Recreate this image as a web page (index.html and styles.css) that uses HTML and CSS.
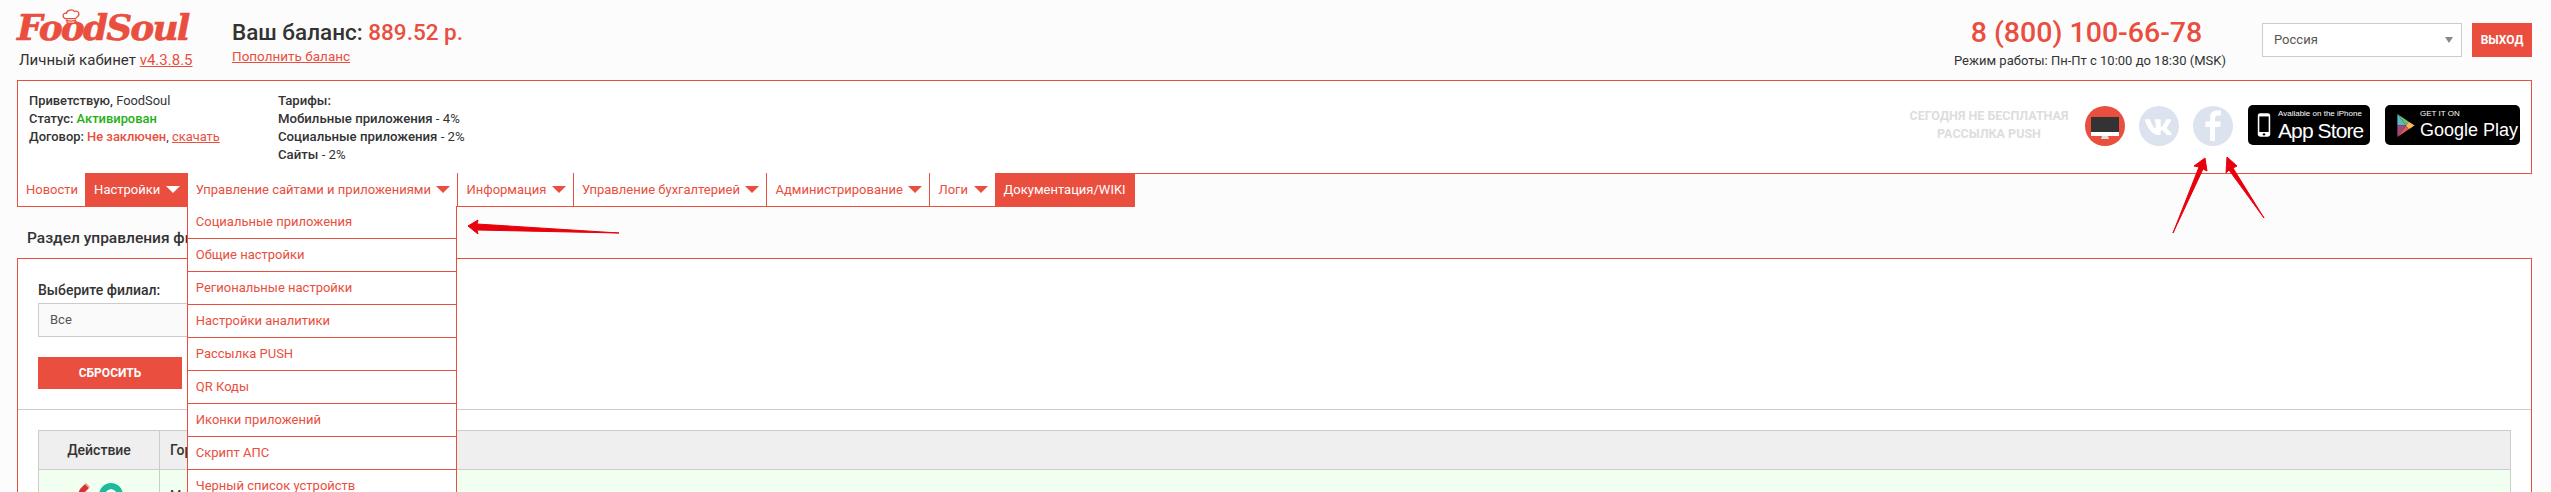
FILE: index.html
```html
<!DOCTYPE html>
<html lang="ru">
<head>
    <meta charset="UTF-8">
    <meta name="viewport" content="width=device-width, initial-scale=1.0">
    <title>FoodSoul</title>
    <link rel="stylesheet" href="styles.css">
</head>
<body>
<div class="page">

    <!-- header -->
    <header class="top">
        <div class="logo">
            <div class="logo-name">
                <svg class="logo-hat" viewBox="0 0 22 18"><path d="M5 12C1 11 1 5 6 6c0-4 7-5 9-2 4-2 7 3 3 6l-2 2c-4 0-8 0-11 0zM6 14c3 1 7 1 10 0l-1 3H7z" fill="#fff" stroke="#e94e3e" stroke-width="1.4"/></svg>
                FoodSoul
            </div>
            <div class="logo-sub">Личный кабинет <a href="#">v4.3.8.5</a></div>
        </div>
        <div class="balance">
            <div class="balance-sum">Ваш баланс: <span>889.52 р.</span></div>
            <a href="#">Пополнить баланс</a>
        </div>
        <div class="phone">
            <div class="phone-num">8 (800) 100-66-78</div>
            <div class="phone-hours">Режим работы: Пн-Пт с 10:00 до 18:30 (MSK)</div>
        </div>
        <div class="country">Россия<i></i></div>
        <a class="logout" href="#">ВЫХОД</a>
    </header>

    <!-- info -->
    <section class="info">
        <div class="info-col first">
            <p><b>Приветствую,</b> FoodSoul</p>
            <p><b>Статус:</b> <b class="green">Активирован</b></p>
            <p><b>Договор:</b> <b class="red">Не заключен</b>, <a href="#">скачать</a></p>
        </div>
        <div class="info-col">
            <p><b>Тарифы:</b></p>
            <p><b>Мобильные приложения</b> - 4%</p>
            <p><b>Социальные приложения</b> - 2%</p>
            <p><b>Сайты</b> - 2%</p>
        </div>
        <div class="push">СЕГОДНЯ НЕ БЕСПЛАТНАЯ<br>РАССЫЛКА PUSH</div>
        <div class="round monitor">
            <svg viewBox="0 0 40 40" width="40" height="40"><rect x="6" y="11" width="28" height="19" fill="#fff"/><rect x="6" y="11" width="28" height="15" fill="#333"/><path d="M17 30h6l1 3h-8z" fill="#ddd"/></svg>
        </div>
        <div class="round soc">
            <svg viewBox="0 0 24 24" width="30" height="30"><path fill="#fff" d="M21.5 7.5c.15-.5 0-.85-.7-.85h-2.3c-.6 0-.85.3-1 .65 0 0-1.15 2.85-2.8 4.7-.5.5-.75.7-1 .7-.15 0-.35-.15-.35-.65V7.5c0-.6-.15-.85-.65-.85H9c-.35 0-.6.25-.6.5 0 .55.85.7.95 2.3v3.35c0 .75-.15.9-.4.9-.8 0-2.7-2.9-3.85-6.2-.2-.65-.45-.85-1.05-.85H1.7c-.65 0-.8.3-.8.65 0 .6.8 3.65 3.7 7.7 1.95 2.75 4.65 4.25 7.1 4.25 1.5 0 1.65-.35 1.65-.9v-2.1c0-.65.15-.8.6-.8.35 0 .95.15 2.3 1.5 1.55 1.55 1.8 2.25 2.65 2.25h2.3c.65 0 1-.35.8-1-.2-.65-.95-1.55-1.95-2.65-.55-.65-1.35-1.3-1.6-1.65-.35-.45-.25-.65 0-1.05 0 0 2.85-4 3.15-5.4z"/></svg>
        </div>
        <div class="round soc">
            <svg viewBox="0 0 40 40" width="40" height="40"><path fill="#fff" d="M22 35V21h5l.8-5.500H22v-3.200c0-1.700.6-2.800 2.900-2.800H28V4.600C27.300 4.500 25.800 4.400 24 4.400c-4.200 0-7 2.500-7 7.200v3.900h-4.500V21H17v14z"/></svg>
        </div>
        <a class="store app" href="#">
            <svg viewBox="0 0 18 32" width="14" height="26"><rect x="1" y="1" width="16" height="30" rx="3" fill="#fff"/><rect x="3" y="5" width="12" height="20" fill="#000"/><circle cx="9" cy="28" r="1.500" fill="#000"/></svg>
            <span class="store-text"><small>Available on the iPhone</small><b>App Store</b></span>
        </a>
        <a class="store gplay" href="#">
            <svg viewBox="0 0 20 26" width="20" height="25"><path d="M1 1v12h9z" fill="#5bb8c4"/><path d="M1 25V13h9z" fill="#a04a7c"/><path d="M1 1l12 8-3 4z" fill="#6fbe6a"/><path d="M1 25l12-8-3-4z" fill="#dc5a54"/><path d="M13 9l6 4-6 4-3-4z" fill="#f5b75f"/></svg>
            <span class="store-text"><small>GET IT ON</small><b>Google Play</b></span>
        </a>
    </section>

    <!-- menu -->
    <nav class="menu">
        <a class="menu-item" href="#">Новости</a>
        <a class="menu-item active arrow" href="#">Настройки</a>
        <div class="menu-item arrow open">
            Управление сайтами и приложениями
            <ul class="dropdown">
                <li>Социальные приложения</li>
                <li>Общие настройки</li>
                <li>Региональные настройки</li>
                <li>Настройки аналитики</li>
                <li>Рассылка PUSH</li>
                <li>QR Коды</li>
                <li>Иконки приложений</li>
                <li>Скрипт АПС</li>
                <li>Черный список устройств</li>
            </ul>
        </div>
        <a class="menu-item arrow" href="#">Информация</a>
        <a class="menu-item arrow" href="#">Управление бухгалтерией</a>
        <a class="menu-item arrow" href="#">Администрирование</a>
        <a class="menu-item arrow" href="#">Логи</a>
        <a class="menu-item active" href="#">Документация/WIKI</a>
    </nav>

    <h1 class="title">Раздел управления филиалами</h1>

    <!-- content -->
    <section class="panel">
        <div class="filter">
            <label>Выберите филиал:</label>
            <div class="branch">Все</div>
            <a class="reset" href="#">СБРОСИТЬ</a>
        </div>
        <div class="list">
            <table>
                <thead>
                    <tr><th class="col-action">Действие</th><th class="col-city">Город</th></tr>
                </thead>
                <tbody>
                    <tr>
                        <td class="col-action">
                            <div class="actions">
                                <svg viewBox="0 0 14 14" width="14" height="14"><path d="M1 13l3-7 5-5 4 4-5 5z" fill="#d9303a"/><path d="M9 1l1-1 4 4-1 1z" fill="#f0a070"/></svg>
                                <i class="view"></i>
                            </div>
                        </td>
                        <td class="col-city">Москва</td>
                    </tr>
                </tbody>
            </table>
        </div>
    </section>

    <!-- red arrows drawn over the screenshot -->
    <svg class="marks" width="2551" height="492" viewBox="0 0 2551 492">
        <path d="M468 226l10-6-1 4 142 9-142-3 1 4zM2205 158l2 13-4-2-30 64 26-66-5-1zM2227 157l10 9-4 2 31 50-35-48-3 3z" fill="#e8000c" stroke="#e8000c" stroke-width="1"/>
    </svg>
</div>
</body>
</html>
```

FILE: styles.css
```css
* {
    box-sizing: border-box;
}

html, body {
    margin: 0;
    height: 492px;
    overflow: hidden;
}

body {
    background-color: #fcfcfc;
    color: #333;
    font-family: Roboto, "Noto Sans", sans-serif;
    font-size: 13px;
}

a {
    color: #e94e3e;
}

p {
    margin: 0;
}

.page {
    position: relative;
    height: 492px;
    padding: 0 19px 0 17px;
    overflow: hidden;
}

/* header */
.top {
    display: flex;
    align-items: flex-start;
    height: 80px;
}

.logo {
    width: 215px;
    padding-top: 9px;
}

.logo-name {
    position: relative;
    height: 36px;
    color: #e94e3e;
    font-family: "DejaVu Serif", serif;
    font-size: 36px;
    font-weight: bold;
    font-style: italic;
    line-height: 36px;
    letter-spacing: -1.9px;
    white-space: nowrap;
    -webkit-text-stroke: 0.6px #e94e3e;
}

.logo-hat {
    position: absolute;
    left: 44px;
    top: -1px;
    width: 20px;
    height: 16px;
}

.logo-sub {
    margin: 5px 0 0 2px;
    font-size: 15px;
    line-height: 20px;
}

.balance {
    flex: 1;
    padding-top: 16px;
}

.balance-sum {
    font-size: 22.5px;
    font-weight: 500;
    line-height: 32px;
}

.balance-sum span {
    color: #e94e3e;
}

.balance a {
    display: block;
    font-size: 13.500px;
    line-height: 16px;
}

.phone {
    width: 265px;
    margin-right: 43px;
    padding-top: 14px;
    text-align: center;
    white-space: nowrap;
}

.phone-num {
    color: #e94e3e;
    font-size: 28.5px;
    font-weight: 500;
    line-height: 38px;
}

.phone-hours {
    font-size: 13px;
    line-height: 18px;
}

.country {
    position: relative;
    width: 200px;
    height: 34px;
    margin-top: 23px;
    padding-left: 11px;
    background-color: #fff;
    border: 1px solid #ccc;
    color: #555;
    line-height: 32px;
}

.country i {
    position: absolute;
    right: 8px;
    top: 13px;
    border-top: 6px solid #888;
    border-left: 4px solid transparent;
    border-right: 4px solid transparent;
}

.logout {
    width: 60px;
    height: 34px;
    margin: 23px 0 0 10px;
    background-color: #e94e3e;
    color: #fff;
    font-size: 12px;
    font-weight: bold;
    line-height: 34px;
    text-align: center;
    text-decoration: none;
}

/* info */
.info {
    display: flex;
    align-items: flex-start;
    height: 94px;
    padding: 11px 11px 0 11px;
    background-color: #fff;
    border: 1px solid #e94e3e;
    line-height: 18px;
}

.info-col {
    width: 250px;
    font-size: 13.2px;
}

.info-col b {
    font-weight: 500;
}

.info-col.first {
    width: 249px;
    font-size: 12.9px;
}

.green {
    color: #22b014;
}

.red {
    color: #e94e3e;
}

.push {
    width: 162px;
    margin: 15px 15px 0 auto;
    color: #ddd;
    font-size: 12.5px;
    font-weight: bold;
    text-align: center;
    white-space: nowrap;
}

.round {
    display: flex;
    align-items: center;
    justify-content: center;
    width: 40px;
    height: 40px;
    margin: 14px 14px 0 0;
    border-radius: 50%;
    background-color: #dce3ee;
}

.monitor {
    background-color: #e94e3e;
}

.store {
    display: flex;
    align-items: center;
    height: 40px;
    margin-top: 13px;
    background-color: #000;
    border-radius: 5px;
    color: #fff;
    text-decoration: none;
    white-space: nowrap;
}

.app {
    gap: 7px;
    width: 122px;
    margin-left: 1px;
    padding-left: 9px;
}

.gplay {
    gap: 4px;
    width: 135px;
    margin-left: 15px;
    padding-left: 11px;
}

.store-text {
    display: flex;
    flex-direction: column;
    font-family: "Liberation Sans", sans-serif;
}

.store-text small {
    font-size: 8px;
    line-height: 10px;
}

.store-text b {
    font-size: 21px;
    font-weight: normal;
    line-height: 23px;
    letter-spacing: -0.9px;
}

.gplay b {
    font-size: 18px;
    letter-spacing: 0;
}

/* menu */
.menu {
    display: inline-flex;
    vertical-align: top;
    height: 34px;
    background-color: #fff;
    border: 1px solid #e94e3e;
    border-top: none;
    margin-top: -1px;
}

.menu-item {
    position: relative;
    display: flex;
    align-items: center;
    padding: 0 7px 0 8px;
    border-right: 1px solid #e94e3e;
    color: #e94e3e;
    font-size: 13px;
    text-decoration: none;
    white-space: nowrap;
}

.menu-item.arrow::after {
    content: "";
    margin-left: 5.5px;
    border-top: 7px solid #e94e3e;
    border-left: 7px solid transparent;
    border-right: 7px solid transparent;
}

.menu-item.active {
    background-color: #e94e3e;
    color: #fff;
}

.menu-item.active::after {
    border-top-color: #fff;
}

.dropdown {
    position: absolute;
    left: -1px;
    top: 33px;
    z-index: 5;
    width: 270px;
    margin: 0;
    padding: 0;
    list-style: none;
}

.dropdown li {
    height: 33px;
    padding-left: 8px;
    background-color: #fff;
    border: 1px solid #e94e3e;
    border-top: none;
    line-height: 32px;
}

.title {
    height: 51px;
    margin: 0;
    padding-left: 10px;
    font-size: 15.5px;
    font-weight: 500;
    line-height: 62px;
}

/* content */
.panel {
    height: 300px;
    background-color: #fff;
    border: 1px solid #e94e3e;
}

.filter {
    height: 151px;
    padding: 21px 20px 0;
    border-bottom: 1px solid #ccc;
}

.filter label {
    display: block;
    font-size: 14px;
    font-weight: 500;
    line-height: 20px;
}

.branch {
    width: 300px;
    height: 34px;
    margin-top: 3px;
    padding-left: 11px;
    background-color: #fafafa;
    border: 1px solid #ccc;
    line-height: 32px;
    color: #555;
}

.reset {
    display: block;
    width: 144px;
    height: 32px;
    margin-top: 20px;
    background-color: #e94e3e;
    color: #fff;
    font-size: 12px;
    font-weight: bold;
    line-height: 32px;
    text-align: center;
    text-decoration: none;
}

.list {
    padding: 20px 20px 0;
}

table {
    width: 100%;
    border-collapse: collapse;
}

th, td {
    border: 1px solid #ccc;
    text-align: left;
}

th {
    height: 39px;
    padding: 0 10px;
    background-color: #efefef;
    font-size: 14px;
    font-weight: 500;
}

td {
    height: 50px;
    padding: 0 10px;
    background-color: #f0fff0;
}

th.col-action {
    width: 121px;
    text-align: center;
}

.actions {
    display: flex;
    gap: 9px;
    justify-content: center;
}

.view {
    display: block;
    width: 24px;
    height: 24px;
    background-color: #1abc9c;
    border: 6px solid #1abc9c;
    border-radius: 50%;
    box-shadow: inset 0 0 0 6px #fff;
}

.marks {
    position: absolute;
    left: 0;
    top: 0;
    z-index: 9;
    pointer-events: none;
}
```
